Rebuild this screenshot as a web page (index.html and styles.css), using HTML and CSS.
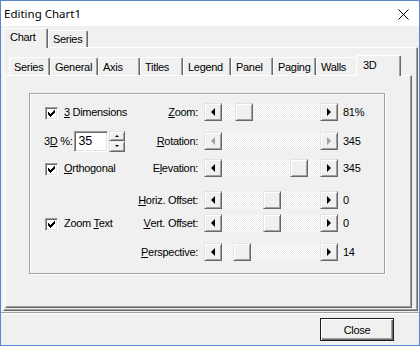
FILE: index.html
```html
<!DOCTYPE html>
<html lang="en">
<head>
    <meta charset="UTF-8">
    <title>Editing Chart1</title>
    <link rel="stylesheet" href="styles.css">
</head>
<body>
    <div class="window">
        <div class="titlebar">
            <span class="title">Editing Chart1</span>
            <svg class="close-x" width="11" height="11" viewBox="0 0 11 11">
                <path d="M0.5 0.5 L10.5 10.5 M10.5 0.5 L0.5 10.5" stroke="#000" stroke-width="1" fill="none"/>
            </svg>
        </div>

        <div class="client">
            <div class="tabs outer-tabs">
                <div class="tab tab-chart active">Chart</div>
                <div class="tab tab-series2">Series</div>
            </div>

            <div class="page outer-page">
                <div class="tabs inner-tabs">
                    <div class="tab tab-series">Series</div>
                    <div class="tab tab-general">General</div>
                    <div class="tab tab-axis">Axis</div>
                    <div class="tab tab-titles">Titles</div>
                    <div class="tab tab-legend">Legend</div>
                    <div class="tab tab-panel">Panel</div>
                    <div class="tab tab-paging">Paging</div>
                    <div class="tab tab-walls">Walls</div>
                    <div class="tab tab-3d active">3D</div>
                </div>

                <div class="page inner-page">
                    <div class="group">
                        <div class="grid">
                            <!-- row 1 -->
                            <div class="cell">
                                <span class="check"><svg width="7" height="7" viewBox="0 0 7 7"><path d="M0 2h1v3h-1z M1 3h1v3h-1z M2 4h1v3h-1z M3 3h1v3h-1z M4 2h1v3h-1z M5 1h1v3h-1z M6 0h1v3h-1z" fill="#000"/></svg></span>
                                <span class="check-label"><u>3</u> Dimensions</span>
                            </div>
                            <div class="cell label"><u>Z</u>oom:</div>
                            <div class="scroll">
                                <span class="sbtn"><i class="arrow left"></i></span>
                                <span class="track"><span class="thumb" style="margin-left:13px"></span></span>
                                <span class="sbtn"><i class="arrow right"></i></span>
                            </div>
                            <div class="cell value">81%</div>

                            <!-- row 2 -->
                            <div class="cell">
                                <span class="pct-label">3<u>D</u> %:</span>
                                <input class="num" type="text" value="35">
                                <span class="spin">
                                    <span class="sbtn up"><i class="arrow tiny-up"></i></span>
                                    <span class="sbtn down"><i class="arrow tiny-down"></i></span>
                                </span>
                            </div>
                            <div class="cell label"><u>R</u>otation:</div>
                            <div class="scroll disabled">
                                <span class="sbtn"><i class="arrow left"></i></span>
                                <span class="track"></span>
                                <span class="sbtn"><i class="arrow right"></i></span>
                            </div>
                            <div class="cell value">345</div>

                            <!-- row 3 -->
                            <div class="cell">
                                <span class="check"><svg width="7" height="7" viewBox="0 0 7 7"><path d="M0 2h1v3h-1z M1 3h1v3h-1z M2 4h1v3h-1z M3 3h1v3h-1z M4 2h1v3h-1z M5 1h1v3h-1z M6 0h1v3h-1z" fill="#000"/></svg></span>
                                <span class="check-label"><u>O</u>rthogonal</span>
                            </div>
                            <div class="cell label">E<u>l</u>evation:</div>
                            <div class="scroll">
                                <span class="sbtn"><i class="arrow left"></i></span>
                                <span class="track"><span class="thumb" style="margin-left:68px"></span></span>
                                <span class="sbtn"><i class="arrow right"></i></span>
                            </div>
                            <div class="cell value">345</div>

                            <!-- row 4 -->
                            <div class="cell"></div>
                            <div class="cell label"><u>H</u>oriz.&nbsp;Offset:</div>
                            <div class="scroll">
                                <span class="sbtn"><i class="arrow left"></i></span>
                                <span class="track"><span class="thumb" style="margin-left:41px"></span></span>
                                <span class="sbtn"><i class="arrow right"></i></span>
                            </div>
                            <div class="cell value">0</div>

                            <!-- row 5 -->
                            <div class="cell">
                                <span class="check"><svg width="7" height="7" viewBox="0 0 7 7"><path d="M0 2h1v3h-1z M1 3h1v3h-1z M2 4h1v3h-1z M3 3h1v3h-1z M4 2h1v3h-1z M5 1h1v3h-1z M6 0h1v3h-1z" fill="#000"/></svg></span>
                                <span class="check-label">Zoom <u>T</u>ext</span>
                            </div>
                            <div class="cell label"><u>V</u>ert.&nbsp;Offset:</div>
                            <div class="scroll">
                                <span class="sbtn"><i class="arrow left"></i></span>
                                <span class="track"><span class="thumb" style="margin-left:41px"></span></span>
                                <span class="sbtn"><i class="arrow right"></i></span>
                            </div>
                            <div class="cell value">0</div>

                            <!-- row 6 -->
                            <div class="cell"></div>
                            <div class="cell label"><u>P</u>erspective:</div>
                            <div class="scroll">
                                <span class="sbtn"><i class="arrow left"></i></span>
                                <span class="track"><span class="thumb" style="margin-left:11px"></span></span>
                                <span class="sbtn"><i class="arrow right"></i></span>
                            </div>
                            <div class="cell value">14</div>
                        </div>
                    </div>
                </div>
            </div>

            <div class="buttons">
                <button class="btn">Close</button>
            </div>
        </div>
    </div>
</body>
</html>
```

FILE: styles.css
```css
body {
    margin: 0;
    padding: 0;
    width: 420px;
    height: 346px;
    background-color: #f0f0f0;
    color: #000;
    font-family: 'Liberation Sans', Arial, sans-serif;
    font-size: 11px;
    letter-spacing: -0.3px;
}

.window {
    box-sizing: border-box;
    width: 420px;
    height: 346px;
    border: 1px solid #5b87cf;
    display: flex;
    flex-direction: column;
}

.titlebar {
    height: 25px;
    flex: none;
    background-color: #fff;
    display: flex;
    align-items: center;
    justify-content: space-between;
    padding: 0 10px 0 3px;
}

.title {
    font-family: 'Noto Sans', sans-serif;
    font-size: 11.5px;
    letter-spacing: 0;
    margin-top: -1px;
}

.close-x {
    margin-top: 1px;
}

.client {
    flex: 1;
    display: flex;
    flex-direction: column;
    padding: 2px 1px 0 2px;
}

/* tab strips */
.tabs {
    display: flex;
    align-items: flex-end;
    flex: none;
}

.tab {
    box-sizing: border-box;
    padding: 0 0 0 4px;
    background-color: #f0f0f0;
    border: 1px solid;
    border-bottom: 0;
    border-color: #fff #696969 transparent #fff;
    box-shadow: inset -1px 0 #a0a0a0;
    border-radius: 2px 2px 0 0;
    display: flex;
    align-items: center;
    white-space: nowrap;
}

.tab.active {
    position: relative;
    z-index: 1;
    margin: 0 -2px -1px;
    padding-left: 6px;
}

.outer-tabs {
    height: 19px;
    padding-left: 2px;
}

.outer-tabs .tab {
    height: 17px;
}

.outer-tabs .tab.active {
    height: 20px;
    padding-bottom: 4px;
}

.inner-tabs {
    height: 20px;
    padding-left: 4px;
}

.inner-tabs .tab {
    height: 18px;
}

.inner-tabs .tab.active {
    height: 21px;
    padding-bottom: 3px;
}

/* tab widths as the control sizes them */
.tab-chart { width: 40px; }
.tab-series2 { width: 40px; margin-left: 2px; }
.tab-series { width: 41px; }
.tab-general { width: 48px; }
.tab-axis { width: 42px; }
.tab-titles { width: 43px; }
.tab-legend { width: 48px; }
.tab-panel { width: 42px; }
.tab-paging { width: 43px; }
.tab-walls { width: 42px; }
.tab-3d { width: 41px; }
.tab-chart.active,
.tab-3d.active { width: 45px; }

/* tab pages */
.page {
    box-sizing: border-box;
    background-color: #f0f0f0;
    border: 1px solid;
    border-color: #fff #696969 #696969 #fff;
    box-shadow: inset -1px -1px #a0a0a0;
}

.outer-page {
    flex: 1;
    display: flex;
    flex-direction: column;
    padding: 7px 5px 2px 1px;
}

.inner-page {
    flex: 1;
    padding: 17px 0 0 23px;
}

.group {
    box-sizing: border-box;
    width: 356px;
    height: 181px;
    border: 1px solid #a0a0a0;
    box-shadow: inset 1px 1px #fff, 1px 1px #fff;
    padding: 9px 0 0 15px;
}

.grid {
    display: grid;
    grid-template-columns: 80px 79px 134px auto;
    grid-template-rows: 29px 27px 32px 23px 29px 18px;
    align-items: start;
}

.cell {
    height: 18px;
    display: flex;
    align-items: center;
    white-space: nowrap;
}

.label {
    justify-content: flex-end;
    padding-right: 6px;
}

.value {
    padding-left: 5px;
}

/* checkbox */
.check {
    box-sizing: border-box;
    width: 13px;
    height: 13px;
    flex: none;
    background-color: #fff;
    border: 1px solid;
    border-color: #a0a0a0 #fff #fff #a0a0a0;
    box-shadow: inset 1px 1px #696969, inset -1px -1px #e3e3e3;
    display: flex;
    align-items: center;
    justify-content: center;
    margin-top: 2px;
}

.check svg {
    display: block;
    shape-rendering: crispEdges;
}

.check-label {
    margin-left: 6px;
}

/* 3D % spin edit */
.pct-label {
    margin-left: -1px;
    margin-right: 2px;
}

.num {
    box-sizing: border-box;
    width: 34px;
    height: 21px;
    flex: none;
    margin: 0;
    padding: 0 0 0 3px;
    background-color: #fff;
    border: 1px solid;
    border-color: #a0a0a0 #fff #fff #a0a0a0;
    box-shadow: inset 1px 1px #696969, inset -1px -1px #e3e3e3;
    font-family: 'Liberation Sans', Arial, sans-serif;
    font-size: 12.5px;
    letter-spacing: -0.2px;
    color: #000;
    outline: none;
}

.spin {
    display: flex;
    flex-direction: column;
    width: 16px;
    height: 21px;
    margin-left: 1px;
}

.spin .sbtn {
    width: 16px;
}

.spin .up {
    height: 10px;
}

.spin .down {
    height: 11px;
}

/* scroll bars */
.scroll {
    display: flex;
    width: 134px;
    height: 18px;
}

.sbtn,
.thumb {
    box-sizing: border-box;
    width: 18px;
    height: 18px;
    flex: none;
    background-color: #f0f0f0;
    border: 1px solid;
    border-color: #e3e3e3 #696969 #696969 #e3e3e3;
    box-shadow: inset 1px 1px #fff, inset -1px -1px #a0a0a0;
    display: flex;
    align-items: center;
    justify-content: center;
}

.track {
    flex: 1;
    display: flex;
    background-color: #fff;
    background-image: repeating-conic-gradient(#fff 0% 25%, #e9e9e9 0% 50%);
    background-size: 2px 2px;
}

.arrow {
    display: block;
    width: 0;
    height: 0;
    border-style: solid;
}

.arrow.left {
    border-width: 4px 4px 4px 0;
    border-color: transparent #000 transparent transparent;
}

.arrow.right {
    border-width: 4px 0 4px 4px;
    border-color: transparent transparent transparent #000;
}

.arrow.tiny-up {
    border-width: 0 2px 2px 2px;
    border-color: transparent transparent #000 transparent;
}

.arrow.tiny-down {
    border-width: 2px 2px 0 2px;
    border-color: #000 transparent transparent transparent;
}

.disabled .arrow.left {
    border-right-color: #a0a0a0;
}

.disabled .arrow.right {
    border-left-color: #a0a0a0;
}

/* bottom button bar */
.buttons {
    flex: none;
    height: 33px;
    margin: 1px -1px 0 -2px;
    box-sizing: border-box;
    border-top: 1px solid #a0a0a0;
    box-shadow: inset 0 1px #fff;
    padding: 5px 25px 0 0;
    display: flex;
    justify-content: flex-end;
    align-items: flex-start;
}

.btn {
    box-sizing: border-box;
    width: 74px;
    height: 23px;
    margin: 0;
    padding: 0;
    background-color: #f0f0f0;
    border: 1px solid #1e1e1e;
    box-shadow: inset 1px 1px #fff, inset -1px -1px #696969, inset -2px -2px #a0a0a0;
    font-family: 'Liberation Sans', Arial, sans-serif;
    font-size: 11px;
    letter-spacing: -0.3px;
    color: #000;
}
```
